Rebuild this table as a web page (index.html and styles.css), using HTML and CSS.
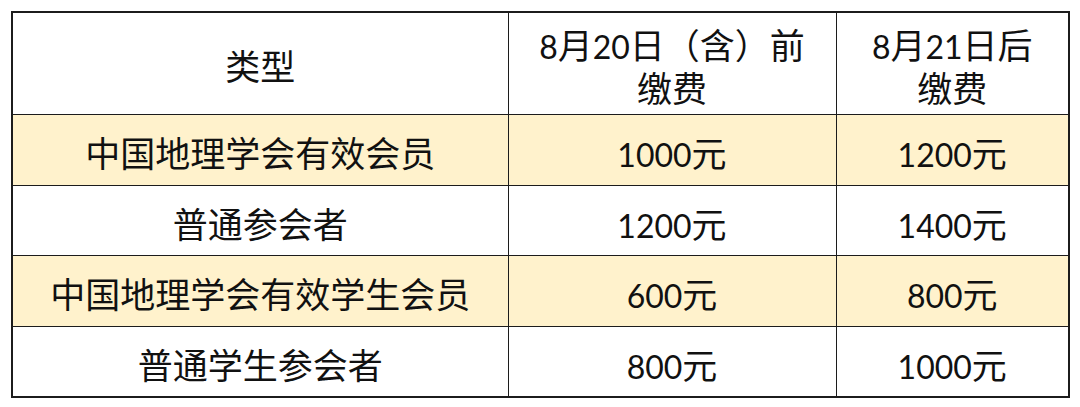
FILE: index.html
```html
<!DOCTYPE html>
<html lang="zh">
<head>
<meta charset="utf-8">
<title>缴费标准</title>
<link rel="stylesheet" href="styles.css">
</head>
<body>
<table class="fees">
  <colgroup>
    <col class="c1">
    <col class="c2">
    <col class="c3">
  </colgroup>
  <thead>
    <tr class="head">
      <th>类型</th>
      <th><span class="line"><span class="num">8</span>月<span class="num">20</span>日（含）前</span><span class="line">缴费</span></th>
      <th><span class="line"><span class="num">8</span>月<span class="num">21</span>日后</span><span class="line">缴费</span></th>
    </tr>
  </thead>
  <tbody>
    <tr class="alt">
      <td>中国地理学会有效会员</td>
      <td><span class="num">1000</span>元</td>
      <td><span class="num">1200</span>元</td>
    </tr>
    <tr>
      <td>普通参会者</td>
      <td><span class="num">1200</span>元</td>
      <td><span class="num">1400</span>元</td>
    </tr>
    <tr class="alt">
      <td>中国地理学会有效学生会员</td>
      <td><span class="num">600</span>元</td>
      <td><span class="num">800</span>元</td>
    </tr>
    <tr>
      <td>普通学生参会者</td>
      <td><span class="num">800</span>元</td>
      <td><span class="num">1000</span>元</td>
    </tr>
  </tbody>
</table>
</body>
</html>
```

FILE: styles.css
```css
html, body {
  margin: 0;
  padding: 0;
  background: #ffffff;
}

body {
  padding: 11px 0 0 11px;
  font-family: "Noto Sans CJK SC", "Noto Sans", sans-serif;
  color: #111111;
}

.fees {
  border-collapse: collapse;
  border: 2px solid #1c1c1c;
  table-layout: fixed;
  width: 1057px;
}

.c1 { width: 496px; }
.c2 { width: 328px; }
.c3 { width: 233px; }

.fees th,
.fees td {
  border: 1px solid #1c1c1c;
  text-align: center;
  vertical-align: middle;
  font-size: 35px;
  font-weight: 400;
  line-height: 43px;
  padding: 0;
  overflow: hidden;
}

.head th {
  height: 99px;
  padding-top: 2px;
}

.line {
  display: block;
  height: 43px;
  line-height: 43px;
}

.fees td {
  height: 65.5px;
  padding-top: 4px;
}

.alt td {
  background: #fff2cc;
}

.num {
  font-family: "Lato", "Liberation Sans", sans-serif;
  font-size: 32px;
  line-height: 1;
}
```
